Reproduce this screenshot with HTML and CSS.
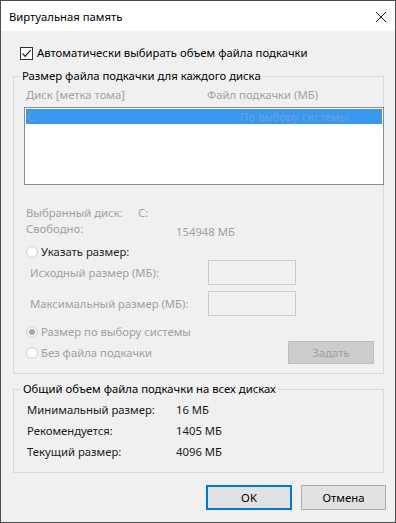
FILE: index.html
```html
<!DOCTYPE html>
<html lang="ru">
<head>
<meta charset="utf-8">
<title>Виртуальная память</title>
<link rel="stylesheet" href="styles.css">
</head>
<body>
<div class="window">
  <div class="titlebar">
    <span class="title">Виртуальная память</span>
    <svg class="close" width="12" height="12" viewBox="0 0 12 12"><path d="M1 1 L11 11 M11 1 L1 11" stroke="#1a1a1a" stroke-width="1" fill="none"/></svg>
  </div>
  <div class="body">
    <div class="check-row">
      <span class="checkbox"><svg width="11" height="11" viewBox="0 0 11 11"><path d="M1.5 5.5 L4.2 8.3 L9.6 2.2" stroke="#222" stroke-width="1.2" fill="none"/></svg></span>
      <span>Автоматически выбирать объем файла подкачки</span>
    </div>

    <fieldset class="group g1">
      <legend>Размер файла подкачки для каждого диска</legend>
      <div class="cols dis"><span class="colh1">Диск [метка тома]</span><span>Файл подкачки (МБ)</span></div>
      <div class="listbox">
        <div class="item"><span class="itc1">C:</span><span>По выбору системы</span></div>
      </div>
      <div class="info r1 dis"><span class="w112">Выбранный диск:</span><span>C:</span></div>
      <div class="info r2 dis"><span class="w150">Свободно:</span><span class="low">154948 МБ</span></div>
      <div class="radio-row first"><span class="radio"></span><span>Указать размер:</span></div>
      <div class="input-row dis"><span class="ilabel">Исходный размер (МБ):</span><span class="edit"></span></div>
      <div class="input-row second dis"><span class="ilabel">Максимальный размер (МБ):</span><span class="edit"></span></div>
      <div class="radio-row sys dis"><span class="radio checked"></span><span>Размер по выбору системы</span></div>
      <div class="last-row">
        <div class="radio-row dis"><span class="radio"></span><span>Без файла подкачки</span></div>
        <span class="btn disabled">Задать</span>
      </div>
    </fieldset>

    <fieldset class="group g2">
      <legend>Общий объем файла подкачки на всех дисках</legend>
      <div class="totals">
        <span>Минимальный размер:</span><span>16 МБ</span>
        <span>Рекомендуется:</span><span>1405 МБ</span>
        <span>Текущий размер:</span><span>4096 МБ</span>
      </div>
    </fieldset>

    <div class="buttons">
      <span class="btn default">OK</span>
      <span class="btn">Отмена</span>
    </div>
  </div>
</div>
</body>
</html>
```

FILE: styles.css
```css
html, body {
  margin: 0;
  padding: 0;
  background: #f0f0f0;
}
body {
  font-family: "Noto Sans", "DejaVu Sans", sans-serif;
  font-size: 11.3px;
  color: #000;
}
.window {
  width: 396px;
  height: 523px;
  box-sizing: border-box;
  border: 1px solid #4d4d4d;
  background: #f0f0f0;
  display: flex;
  flex-direction: column;
}
.titlebar {
  height: 30px;
  flex: none;
  background: #fff;
  display: flex;
  align-items: center;
  justify-content: space-between;
  padding: 0 8px 0 8px;
}
.close {
  display: block;
  margin-top: 1px;
}
.body {
  padding: 0 11px 0 12px;
}
.check-row {
  margin-top: 14px;
  height: 16px;
  line-height: 16px;
  display: flex;
  align-items: center;
  padding-left: 7px;
}
.checkbox {
  width: 13px;
  height: 13px;
  box-sizing: border-box;
  border: 1px solid #333;
  background: #fff;
  display: flex;
  align-items: center;
  justify-content: center;
  margin-right: 4px;
}
.checkbox svg { display: block; }
.group {
  margin: 0;
  border: 1px solid #d9d9d9;
  min-width: 0;
}
.group legend {
  line-height: 16px;
  padding: 0 2px;
  margin-left: -6px;
}
.g1 {
  margin-top: 7px;
  padding: 3px 9px 9px 12px;
}
.dis { color: #a0a0a0; }
.cols {
  display: flex;
  line-height: 16px;
}
.colh1 { width: 181px; }
.listbox {
  margin: 4px -10px 0 -2px;
  height: 78px;
  box-sizing: border-box;
  border: 1px solid #8c8c8c;
  background: #fff;
  padding: 1px 1px 0 1px;
}
.item {
  height: 15px;
  line-height: 15px;
  background: #3897ef;
  color: #6ea1d8;
  display: flex;
  padding-left: 1px;
}
.itc1 { width: 213px; }
.info {
  display: flex;
  line-height: 15px;
  height: 15px;
}
.r1 { margin-top: 20px; }
.r2 { margin-top: 1px; }
.w112 { width: 112px; }
.w150 { width: 150px; }
.low { padding-top: 3px; }
.radio-row {
  display: flex;
  align-items: center;
  height: 16px;
  line-height: 16px;
}
.radio-row.first { margin-top: 8px; color: #1e1e1e; }
.radio-row.sys { margin-top: 8px; }
.radio {
  width: 12px;
  height: 12px;
  box-sizing: border-box;
  border-radius: 50%;
  border: 1px solid #cfcfcf;
  background: #fff;
  margin-right: 3px;
  display: flex;
  align-items: center;
  justify-content: center;
}
.radio.checked {
  background: #f4f4f4;
}
.radio.checked::after {
  content: "";
  width: 6px;
  height: 6px;
  border-radius: 50%;
  background: #a8a8a8;
}
.input-row {
  display: flex;
  align-items: center;
  height: 25px;
  padding-left: 4px;
}
.input-row.second { margin-top: 6px; }
.ilabel { width: 178px; }
.edit {
  width: 88px;
  height: 25px;
  box-sizing: border-box;
  border: 1px solid #cccccc;
  background: #f0f0f0;
}
.last-row {
  margin-top: 1px;
  display: flex;
  align-items: center;
  justify-content: space-between;
  height: 23px;
}
.btn {
  width: 86px;
  height: 25px;
  box-sizing: border-box;
  border: 1px solid #adadad;
  background: #e1e1e1;
  display: flex;
  align-items: center;
  justify-content: center;
}
.btn.disabled {
  height: 23px;
  background: #cccccc;
  border-color: #bfbfbf;
  color: #a0a0a0;
}
.btn.default {
  border: 2px solid #0078d7;
}
.g2 {
  margin-top: 7px;
  padding: 2px 9px 10px 13px;
}
.totals {
  display: grid;
  grid-template-columns: 149px auto;
  grid-auto-rows: 21px;
  line-height: 21px;
  color: #1a1a1a;
}
.buttons {
  margin: 12px -2px 0 0;
  display: flex;
  justify-content: flex-end;
  gap: 9px;
}
.buttons .btn:last-child { width: 85px; }
```
